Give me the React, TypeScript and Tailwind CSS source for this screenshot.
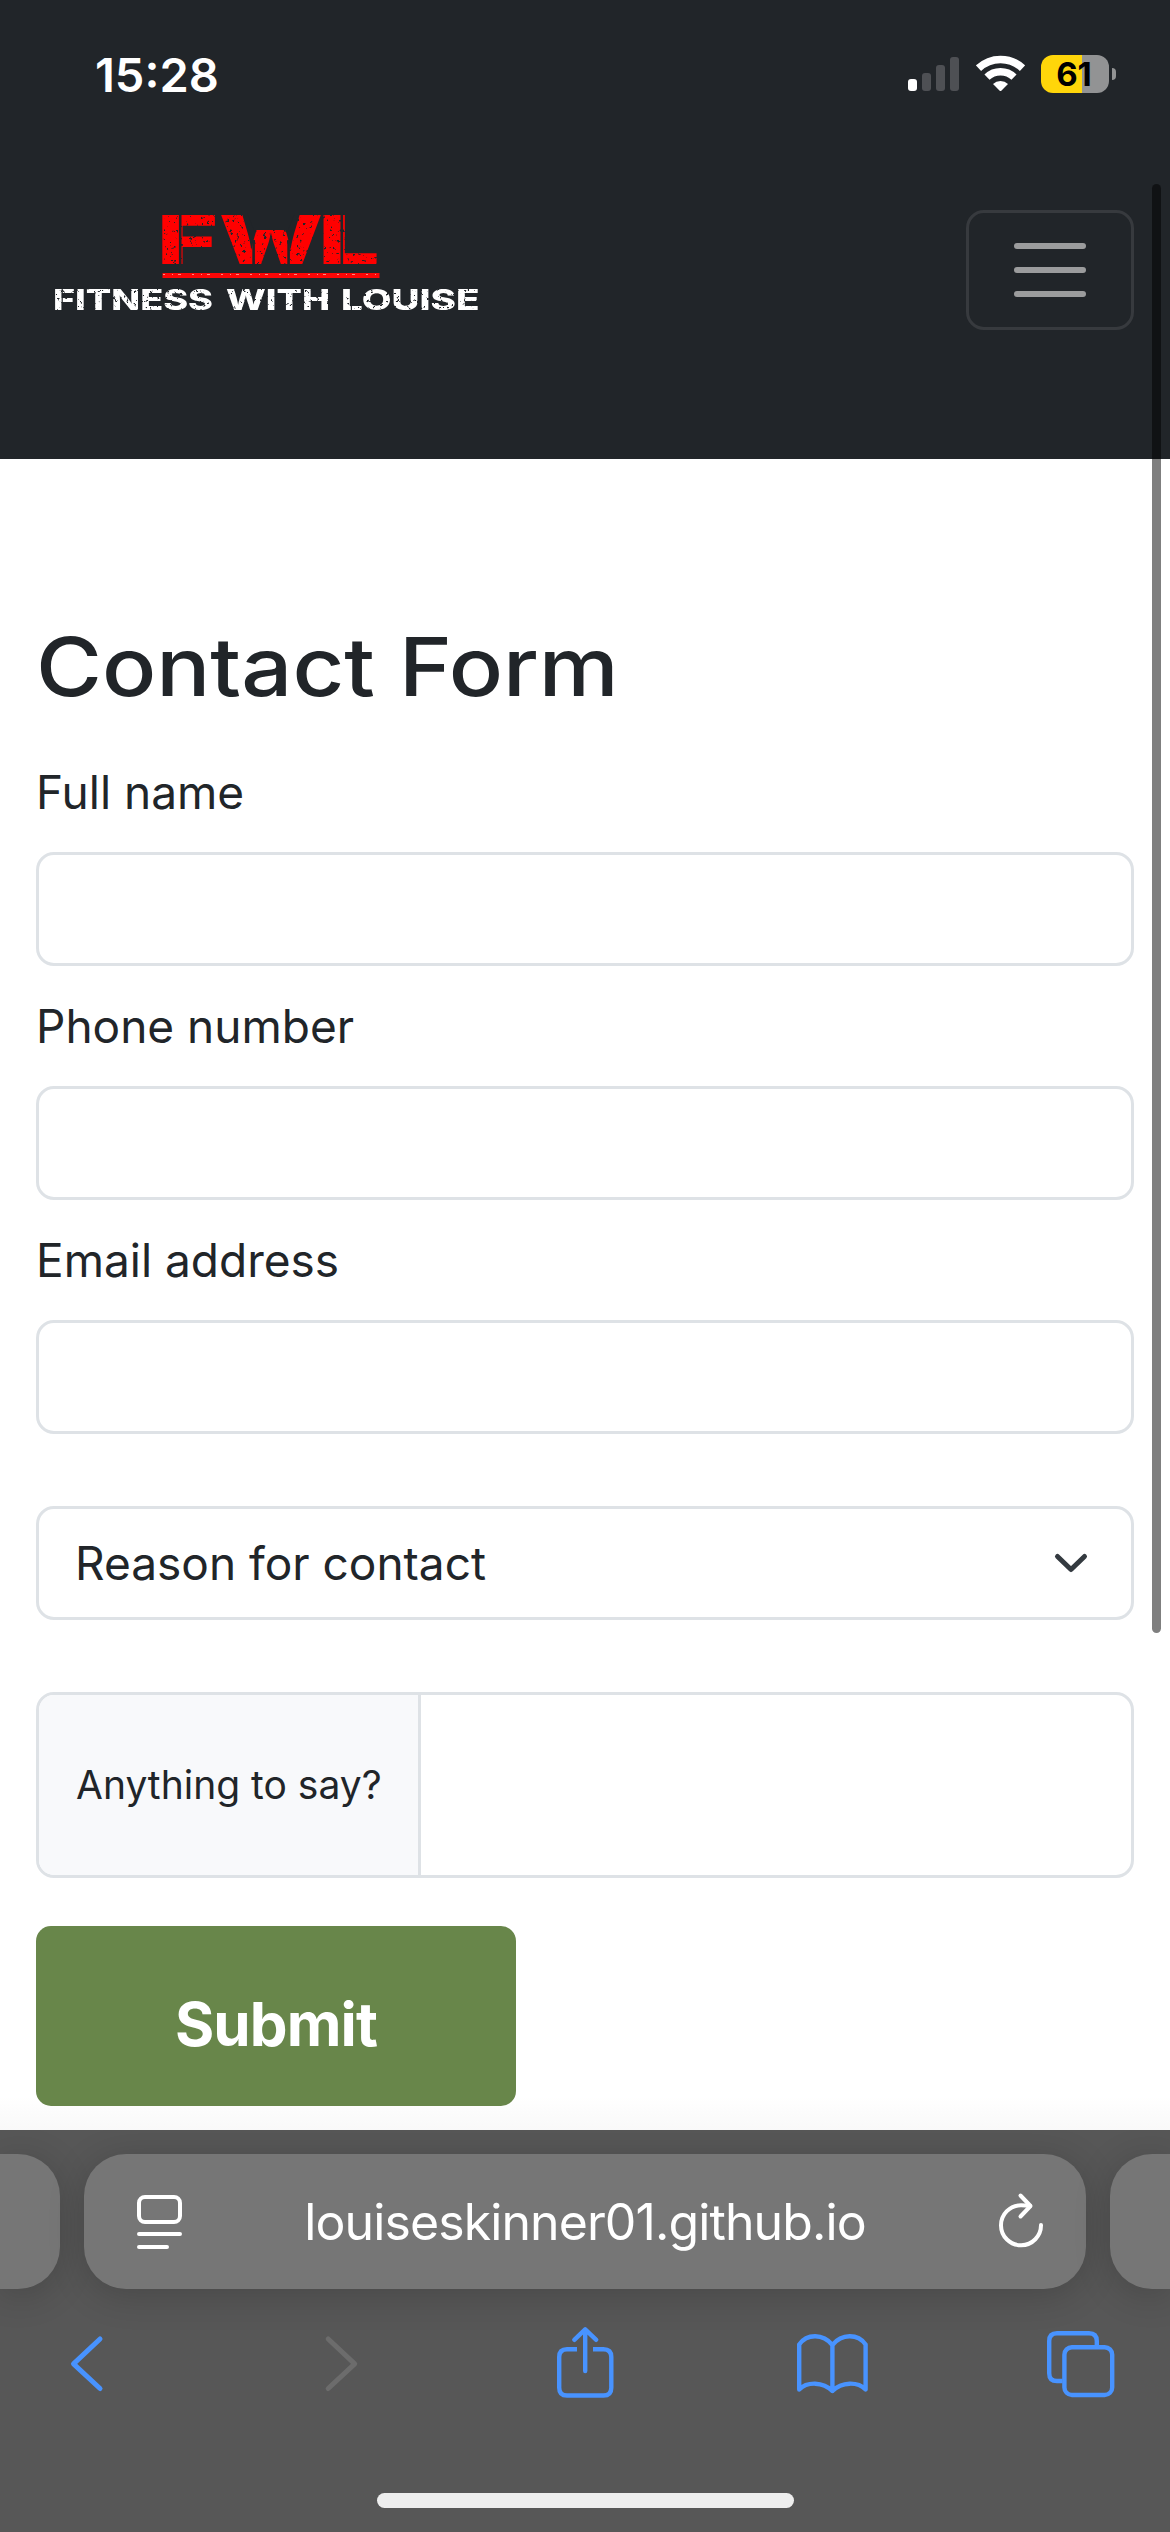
import React from "react";

function StatusBar() {
  return (
    <div className="flex h-[150px] items-start justify-between pr-[54px] pl-[95px]">
      <span className="mt-[44px] text-[47px] leading-[62px] font-semibold text-white">15:28</span>
      <div className="mt-[55px] flex items-start">
        <div className="mt-[2px] mr-[17px] flex h-[34px] items-end gap-[5px]">
          <i className="h-[12px] w-[9px] rounded-[3px] bg-white" />
          <i className="h-[18px] w-[9px] rounded-[3px] bg-[#4e5054]" />
          <i className="h-[26px] w-[9px] rounded-[3px] bg-[#4e5054]" />
          <i className="h-[34px] w-[9px] rounded-[3px] bg-[#4e5054]" />
        </div>
        <svg width="49" height="37" viewBox="0 0 49 37" className="mr-[16px]">
          <g fill="none" stroke="#fff">
            <path d="M2.5 13.2 A32 32 0 0 1 46.5 13.2" strokeWidth="7.6" />
            <path d="M11 22.2 A19.5 19.5 0 0 1 38 22.2" strokeWidth="7.4" />
          </g>
          <path d="M17 29 A11 11 0 0 1 32 29 L25.3 35.8 Q24.5 36.4 23.7 35.8 Z" fill="#fff" />
        </svg>
        <div className="flex h-[38px] w-[68px] items-center justify-center rounded-[12px] bg-[linear-gradient(90deg,#ffd60a_41px,#929394_41px)] pr-[2px]">
          <span className="text-[33px] leading-[38px] font-bold text-black">61</span>
        </div>
        <div className="mt-[13px] ml-[3px] h-[12px] w-[4px] rounded-r-[4px] bg-[#929394]" />
      </div>
    </div>
  );
}

function Logo() {
  return (
    <svg width="440" height="138" viewBox="46 190 440 138" fontFamily="Inter, sans-serif">
      <defs>
        <filter id="worn" x="0" y="0" width="100%" height="100%">
          <feTurbulence type="fractalNoise" baseFrequency="0.3" numOctaves="3" seed="7" />
          <feColorMatrix values="0 0 0 0 0  0 0 0 0 0  0 0 0 0 0  12 0 0 0 -7.8" result="specks" />
          <feComposite in="SourceGraphic" in2="specks" operator="out" />
        </filter>
      </defs>
      <g filter="url(#worn)" fill="#ff0000" fontWeight="900" fontSize="67">
        <text x="157.6" y="263.7" textLength="60" lengthAdjust="spacingAndGlyphs">F</text>
        <text x="219" y="263.7" textLength="104" lengthAdjust="spacingAndGlyphs">W</text>
        <text x="318.6" y="263.7" textLength="61" lengthAdjust="spacingAndGlyphs">L</text>
      </g>
      <path d="M247 213H295L288 230H254Z" fill="#212529" />
      <path d="M180.2 213V266M341.8 213V266M253.6 240V266M288.6 240V266" stroke="#212529" strokeWidth="2.6" />
      <rect x="162.5" y="273" width="217" height="5" fill="#fb0606" />
      <path d="M163 274.5H379" stroke="#ff8a80" strokeWidth="1" strokeDasharray="2 7 1 5 3 11" />
      <g filter="url(#worn)" fill="#fff" fontWeight="800" fontSize="28.5">
        <text x="53" y="310" textLength="160" lengthAdjust="spacingAndGlyphs">FITNESS</text>
        <text x="226" y="310" textLength="104" lengthAdjust="spacingAndGlyphs">WITH</text>
        <text x="341" y="310" textLength="138.5" lengthAdjust="spacingAndGlyphs">LOUISE</text>
      </g>
      <path d="M62.2 288V311M351.4 288V311" stroke="#212529" strokeWidth="1.2" />
    </svg>
  );
}

function Header() {
  return (
    <header className="h-[459px] bg-[#212529]">
      <StatusBar />
      <div className="flex items-start justify-between pr-[36px] pl-[46px]">
        <div className="mt-[40px]">
          <Logo />
        </div>
        <button className="mt-[60px] flex h-[120px] w-[168px] flex-col items-center justify-center gap-[18px] rounded-[18px] border-[3px] border-[#373a3e]">
          <i className="h-[6px] w-[72px] rounded-full bg-[#9b9c9d]" />
          <i className="h-[6px] w-[72px] rounded-full bg-[#9b9c9d]" />
          <i className="h-[6px] w-[72px] rounded-full bg-[#9b9c9d]" />
        </button>
      </div>
    </header>
  );
}

function Field({ label }: { label: string }) {
  return (
    <label className="mb-[24px] block">
      <span className="mb-[24px] block h-[72px] text-[46px] leading-[73px]">{label}</span>
      <input className="block h-[114px] w-full rounded-[18px] border-[3px] border-[#dee2e6] bg-white" />
    </label>
  );
}

function ContactForm() {
  return (
    <main className="flex h-[1671px] flex-col bg-gradient-to-b from-white from-[98%] to-[#f9f9f9] px-[36px] text-[#212529]">
      <h1 className="mt-[158px] mb-[39px] h-[100px] origin-left scale-x-[1.11] self-start text-[81px] leading-[100px] font-[450] whitespace-nowrap">Contact Form</h1>
      <Field label="Full name" />
      <Field label="Phone number" />
      <Field label="Email address" />
      <div className="mt-[48px] flex h-[114px] shrink-0 items-center justify-between rounded-[18px] border-[3px] border-[#dee2e6] bg-white pr-[42px] pl-[36px]">
        <span className="text-[46px] leading-[60px]">Reason for contact</span>
        <svg width="36" height="24" viewBox="0 0 36 24" fill="none" stroke="#343a40" strokeWidth="5" strokeLinecap="round" strokeLinejoin="round">
          <path d="M4.5 5.5L18 18.5L31.5 5.5" />
        </svg>
      </div>
      <div className="mt-[72px] flex h-[186px] shrink-0 overflow-hidden rounded-[18px] border-[3px] border-[#dee2e6] bg-white">
        <div className="flex w-[382px] items-center border-r-[3px] border-[#dee2e6] bg-[#f8f9fb] pl-[37px] whitespace-nowrap">
          <span className="text-[39px] leading-[60px]">Anything to say?</span>
        </div>
        <textarea className="flex-1 resize-none" />
      </div>
      <button className="mt-[48px] flex h-[180px] w-[480px] shrink-0 items-center justify-center rounded-[15px] bg-[#68864a] pt-[15px] text-[60px] font-bold tracking-[-0.9px] text-white">
        Submit
      </button>
    </main>
  );
}

function AddressBar() {
  return (
    <div className="mt-[24px] flex h-[135px] gap-[24px]">
      <div className="w-[60px] rounded-r-[42px] bg-[#767676] shadow-[0_6px_36px_rgba(0,0,0,0.18)]" />
      <div className="flex w-[1002px] items-center justify-between rounded-[42px] bg-[#767676] pr-[41px] pl-[51px] shadow-[0_6px_36px_rgba(0,0,0,0.18)]">
        <svg width="50" height="60" viewBox="135 2192 50 60" fill="none" stroke="#fff" strokeWidth="4" strokeLinecap="round">
          <rect x="139" y="2197" width="41" height="25" rx="6" />
          <path d="M139 2234H180M139 2247H167" />
        </svg>
        <span className="-ml-[10px] text-[50px] leading-[64px] tracking-[-0.9px] text-white">louiseskinner01.github.io</span>
        <svg width="50" height="60" viewBox="994 2191 50 60" fill="none" stroke="#fff" strokeWidth="4" strokeLinecap="round" strokeLinejoin="round">
          <path d="M1040 2224A20 20 0 1 1 1020 2204.3Q1025 2204.3 1029 2205" />
          <path d="M1019.5 2194.5L1029.5 2205L1019.5 2215.5" />
        </svg>
      </div>
      <div className="w-[60px] rounded-l-[42px] bg-[#767676] shadow-[0_6px_36px_rgba(0,0,0,0.18)]" />
    </div>
  );
}

function Toolbar() {
  const line = { fill: "none", stroke: "#4893ff", strokeWidth: 4.4, strokeLinecap: "round", strokeLinejoin: "round" } as const;
  return (
    <nav className="mt-[33px] flex h-[82px] pl-[66px]">
      <svg width="42" height="82" viewBox="66 2322 42 82" {...line} strokeWidth={5}>
        <path d="M100 2339L73.5 2363.8L100 2388.5" />
      </svg>
      <svg className="ml-[212px]" width="42" height="82" viewBox="320 2322 42 82" {...line} stroke="#6c6c6c" strokeWidth={5}>
        <path d="M328.2 2339L354.7 2363.8L328.2 2388.5" />
      </svg>
      <svg className="ml-[190px]" width="66" height="82" viewBox="552 2322 66 82" {...line}>
        <path strokeLinecap="butt" d="M577 2349.2H567Q559.2 2349.2 559.2 2357V2387.7Q559.2 2395.5 567 2395.5H603.5Q611.3 2395.5 611.3 2387.7V2357Q611.3 2349.2 603.5 2349.2H593" />
        <path d="M585.2 2371V2329.5M574.3 2339.8L585.2 2329.3L596.2 2339.8" />
      </svg>
      <svg className="ml-[175px]" width="78" height="82" viewBox="793 2322 78 82" {...line}>
        <path d="M832.4 2391V2345C823 2333.5 807 2333.5 799.2 2344.5V2389.5C807 2381.5 823 2381.5 832.4 2391C841.8 2381.5 857.8 2381.5 865.6 2389.5V2344.5C857.8 2333.5 841.8 2333.5 832.4 2345" />
      </svg>
      <svg className="ml-[172px]" width="76" height="82" viewBox="1042 2322 76 82" {...line}>
        <path strokeLinecap="butt" d="M1061.5 2381H1056Q1048.2 2381 1048.2 2373.2V2341Q1048.2 2333.2 1056 2333.2H1088Q1095.8 2333.2 1095.8 2341V2346" />
        <rect x="1063.4" y="2347.2" width="47.8" height="47.8" rx="7.5" />
      </svg>
    </nav>
  );
}

export default function App() {
  return (
    <div className="relative h-[2532px] w-[1170px] overflow-hidden bg-white font-['Inter',sans-serif]">
      <Header />
      <ContactForm />
      <footer className="flex h-[402px] flex-col overflow-hidden bg-[#575757]">
        <AddressBar />
        <Toolbar />
        <div className="mt-[89px] ml-[377px] h-[15px] w-[417px] rounded-full bg-[#eeeeee]" />
      </footer>
      <div className="absolute top-[184px] right-[9px] h-[1449px] w-[9px] rounded-full bg-black/50" />
    </div>
  );
}
